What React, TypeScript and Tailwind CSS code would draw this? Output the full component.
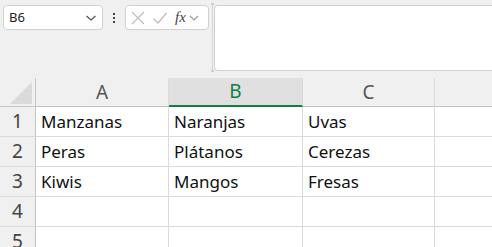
import React from "react";

const rows = [
  ["Manzanas", "Naranjas", "Uvas"],
  ["Peras", "Plátanos", "Cerezas"],
  ["Kiwis", "Mangos", "Fresas"],
  ["", "", ""],
  ["", "", ""],
];

const cols = ["A", "B", "C"];
const font = { fontFamily: '"Noto Sans", "Open Sans", sans-serif' };

export default function App() {
  return (
    <div className="h-[247px] w-[492px] overflow-hidden bg-[#f0f0f0]" style={font}>
      {/* formula bar */}
      <div className="flex h-[78px] items-start pt-[5px]">
        <div className="ml-[3px] flex h-[25px] w-[100px] items-center justify-between rounded-[4px] border border-[#d1d1d1] bg-white pl-[5px] pr-[5px]">
          <span className="text-[13px] text-[#222]">B6</span>
          <svg width="12" height="8" viewBox="0 0 12 8" fill="none" stroke="#555" strokeWidth="1.3">
            <path d="M1.5 2 L6 6 L10.5 2" />
          </svg>
        </div>
        <div className="flex h-[25px] w-[22px] flex-col items-center justify-center gap-[2px]">
          <span className="h-[2px] w-[2px] bg-[#444]" />
          <span className="h-[2px] w-[2px] bg-[#444]" />
          <span className="h-[2px] w-[2px] bg-[#444]" />
        </div>
        <div className="flex h-[25px] w-[84px] items-center rounded-[4px] border border-[#d1d1d1] bg-white pl-[4px]">
          <svg width="16" height="16" viewBox="0 0 16 16" fill="none" stroke="#bdbdbd" strokeWidth="1.2">
            <path d="M2 2 L14 14 M14 2 L2 14" />
          </svg>
          <svg className="ml-[6px]" width="16" height="16" viewBox="0 0 16 16" fill="none" stroke="#bdbdbd" strokeWidth="1.2">
            <path d="M1.5 8.5 L6 13 L14.5 3" />
          </svg>
          <span className="ml-[7px] text-[15px] italic leading-none text-[#444]" style={{ fontFamily: '"Liberation Serif", serif' }}>
            fx
          </span>
          <svg className="ml-[3px]" width="10" height="8" viewBox="0 0 10 8" fill="none" stroke="#9a9a9a" strokeWidth="1.1">
            <path d="M1 2 L5 6 L9 2" />
          </svg>
        </div>
        <div className="-mt-[2px] ml-[1px] flex h-[69px] w-[4px] flex-col items-center justify-between">
          <span className="h-[2px] w-[3px] rounded-full bg-[#c8c8c8]" />
          <span className="h-full w-[1px] bg-[#d6d6d6]" />
          <span className="h-[2px] w-[3px] rounded-full bg-[#c8c8c8]" />
        </div>
        <div className="h-[66px] flex-1 rounded-l-[4px] border border-r-0 border-[#d1d1d1] bg-white" />
      </div>

      {/* grid */}
      <div className="grid grid-cols-[36px_133px_134px_132px_1fr] bg-white">
        <div className="relative h-[29px] border-b border-r border-[#c4c4c4] bg-[#f0f0f0]">
          <svg className="absolute bottom-[2px] right-[3px]" width="22" height="22" viewBox="0 0 22 22">
            <path d="M22 0 L22 22 L0 22 Z" fill="#dadada" />
          </svg>
        </div>
        {cols.map((c) => (
          <div
            key={c}
            className={
              c === "B"
                ? "flex h-[29px] items-center justify-center border-b-2 border-r border-b-[#137e43] border-r-[#dadada] bg-[#e0e0e0] text-[19px] text-[#137e43]"
                : "flex h-[29px] items-center justify-center border-b border-r border-b-[#c4c4c4] border-r-[#dadada] bg-[#f0f0f0] text-[19px] text-[#555]"
            }
          >
            {c}
          </div>
        ))}
        <div className="h-[29px] border-b border-[#c4c4c4] bg-[#f0f0f0]" />

        {rows.map((r, i) => (
          <React.Fragment key={i}>
            <div className="flex h-[30px] items-center justify-center border-b border-r border-b-[#dadada] border-r-[#c4c4c4] bg-[#f0f0f0] text-[19px] text-[#444]">
              {i + 1}
            </div>
            {r.map((v, j) => (
              <div
                key={j}
                className="flex h-[30px] items-center border-b border-r border-[#dadada] pl-[5px] text-[17px] text-[#111]"
              >
                {v}
              </div>
            ))}
            <div className="h-[30px] border-b border-[#dadada]" />
          </React.Fragment>
        ))}
      </div>
    </div>
  );
}
